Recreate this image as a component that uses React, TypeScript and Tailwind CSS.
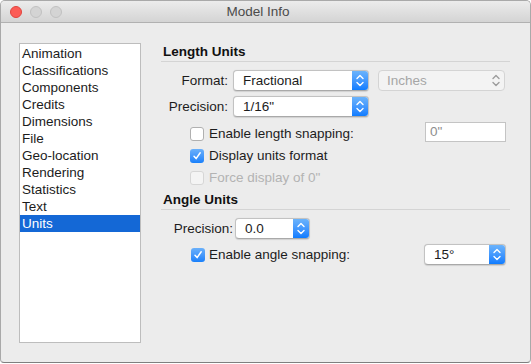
import {ReactNode} from 'react'

const items = [
    "Animation", "Classifications", "Components", "Credits", "Dimensions", "File",
    "Geo-location", "Rendering", "Statistics", "Text", "Units",
]

function Chevrons({color}: {color: string}) {
    return (
        <svg width="16" height="21" viewBox="0 0 16 21" fill="none">
            <path d="M5 8.5 L8 5.5 L11 8.5" stroke={color} strokeWidth="1.4" strokeLinecap="round" strokeLinejoin="round"/>
            <path d="M5 12.5 L8 15.5 L11 12.5" stroke={color} strokeWidth="1.4" strokeLinecap="round" strokeLinejoin="round"/>
        </svg>
    )
}

function Popup({value, width, disabled}: {value: string, width: string, disabled?: boolean}) {
    if (disabled) {
        return (
            <div className={`${width} h-[21px] flex items-center rounded-[4px] border border-[#d4d4d4] bg-[#f3f3f3] pl-[8px] text-[#a6a6a6]`}>
                <span className="flex-1">{value}</span>
                <Chevrons color="#9c9c9c"/>
            </div>
        )
    }
    return (
        <div className={`${width} h-[21px] flex items-stretch rounded-[4px] border border-[#c2c2c2] border-b-[#a9a9a9] bg-white shadow-[0_0.5px_1px_rgba(0,0,0,0.12)] overflow-hidden`}>
            <span className="flex-1 flex items-center pl-[9px] text-[#1c1c1c]">{value}</span>
            <div className="w-[16px] flex items-center justify-center bg-gradient-to-b from-[#6bb3fb] to-[#0c7cff]">
                <Chevrons color="#ffffff"/>
            </div>
        </div>
    )
}

function Checkbox({checked, disabled}: {checked?: boolean, disabled?: boolean}) {
    if (checked) {
        return (
            <div className="w-[14px] h-[14px] rounded-[3px] bg-gradient-to-b from-[#6ab0fa] to-[#1680fb] flex items-center justify-center">
                <svg width="10" height="10" viewBox="0 0 10 10" fill="none">
                    <path d="M2 5.3 L4.1 7.6 L8.2 1.8" stroke="#fff" strokeWidth="1.5" strokeLinecap="round" strokeLinejoin="round"/>
                </svg>
            </div>
        )
    }
    return (
        <div className={`w-[14px] h-[14px] rounded-[3px] border ${disabled ? "border-[#d6d6d6] bg-[#f4f4f4]" : "border-[#b0b0b0] bg-white"}`}/>
    )
}

function CheckRow({label, checked, disabled, children}: {label: string, checked?: boolean, disabled?: boolean, children?: ReactNode}) {
    return (
        <div className="h-[22px] flex items-center pl-[29px]">
            <Checkbox checked={checked} disabled={disabled}/>
            <span className={`ml-[5px] ${disabled ? "text-[#b3b3b3]" : "text-[#1c1c1c]"}`}>{label}</span>
            {children}
        </div>
    )
}

function Section({title}: {title: string}) {
    return (
        <div>
            <div className="h-[16px] leading-[16px] pl-[2px] font-bold text-[#111]">{title}</div>
            <div className="h-px bg-[#d4d4d4] mt-px"/>
        </div>
    )
}

export default function App() {
    return (
        <div className="w-[531px] h-[364px] bg-white text-[13.5px] leading-[16px]"
             style={{fontFamily: '"Liberation Sans", Arial, sans-serif'}}>
            <div className="w-[531px] h-[363px] rounded-t-[5px] rounded-b-[4px] border border-[#a9a9a9] border-b-[#7f7f7f] bg-[#ececec] overflow-hidden flex flex-col">
                <div className="h-[22px] flex items-center relative bg-gradient-to-b from-[#ececec] to-[#d4d4d4] border-b border-[#b1b1b1]">
                    <div className="flex gap-[8px] pl-[9px]">
                        <div className="w-[12px] h-[12px] rounded-full bg-[#fc5c56] border border-[#e0443e]"/>
                        <div className="w-[12px] h-[12px] rounded-full bg-[#d4d4d4] border border-[#c1c1c1]"/>
                        <div className="w-[12px] h-[12px] rounded-full bg-[#d4d4d4] border border-[#c1c1c1]"/>
                    </div>
                    <div className="flex-1 text-center text-[#4b4b4b] pr-[76px]">Model Info</div>
                </div>

                <div className="flex pl-[18px] pt-[20px]">
                    <div className="w-[122px] h-[300px] bg-white border border-[#bdbdbd] pt-[1px]">
                        {items.map((item) => (
                            <div key={item}
                                 className={`h-[17px] leading-[17px] pl-[2px] ${item === "Units" ? "bg-[#1468d6] text-white" : "text-[#1c1c1c]"}`}>
                                {item}
                            </div>
                        ))}
                    </div>

                    <div className="w-[349px] ml-[20px] pt-[1px] flex flex-col">
                        <Section title="Length Units"/>
                        <div className="flex items-center mt-[8px]">
                            <span className="w-[67px] text-right text-[#1c1c1c]">Format:</span>
                            <div className="ml-[5px]"><Popup value="Fractional" width="w-[136px]"/></div>
                            <div className="ml-[9px]"><Popup value="Inches" width="w-[127px]" disabled/></div>
                        </div>
                        <div className="flex items-center mt-[5px]">
                            <span className="w-[67px] text-right text-[#1c1c1c]">Precision:</span>
                            <div className="ml-[5px]"><Popup value={'1/16"'} width="w-[136px]"/></div>
                        </div>
                        <div className="mt-[6px]">
                            <CheckRow label="Enable length snapping:">
                                <div className="ml-auto mr-[4px] mb-[4px] w-[81px] h-[20px] bg-white border border-[#c4c4c4] flex items-center pl-[4px] text-[#8e8e8e]">0"</div>
                            </CheckRow>
                            <CheckRow label="Display units format" checked/>
                            <CheckRow label={'Force display of 0"'} disabled/>
                        </div>
                        <div className="mt-[3px]">
                            <Section title="Angle Units"/>
                        </div>
                        <div className="flex items-center mt-[8px]">
                            <span className="w-[72px] text-right text-[#1c1c1c]">Precision:</span>
                            <div className="ml-[2px]"><Popup value="0.0" width="w-[75px]"/></div>
                        </div>
                        <div className="flex items-center h-[21px] mt-[5px] pl-[30px]">
                            <Checkbox checked/>
                            <span className="ml-[4px] text-[#1c1c1c]">Enable angle snapping:</span>
                            <div className="ml-auto mr-[4px]"><Popup value="15°" width="w-[82px]"/></div>
                        </div>
                    </div>
                </div>
            </div>
        </div>
    )
}
